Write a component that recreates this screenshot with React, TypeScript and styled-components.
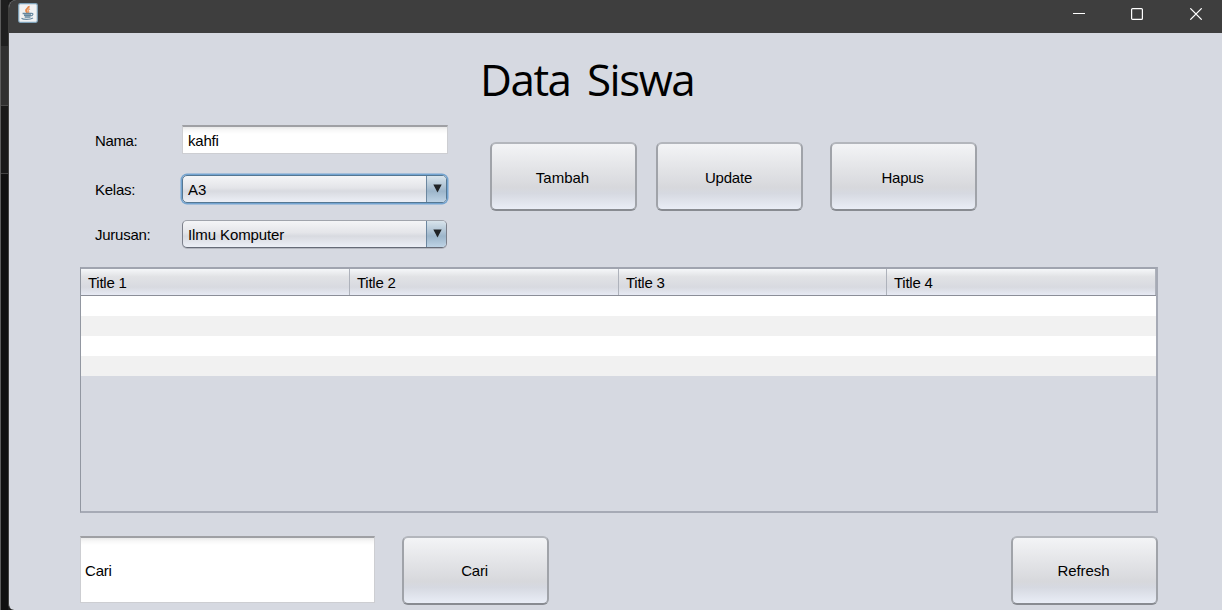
import React from 'react';
import styled, { createGlobalStyle, css } from 'styled-components';

const Global = createGlobalStyle`
  * { box-sizing: border-box; }
  html, body { margin: 0; padding: 0; overflow: hidden; background: #d6d9e1; }
  body { font: 15px/20px "Liberation Sans", Arial, sans-serif; color: #000; }
`;

const Screen = styled.div`
  display: flex;
  width: 1222px;
  height: 610px;
  overflow: hidden;
  background: #1b1b1b;
`;

const Backdrop = styled.div`
  width: 8px;
  flex: none;
  border-left: 1px solid #5c5c5c;
  background: linear-gradient(
    #1f1f1f 0 46px, #303030 46px 105px, #4b4b4b 105px 106px,
    #191919 106px 173px, #444 173px 174px, #101010 174px
  );
`;

const Window = styled.div`
  flex: 1;
  display: flex;
  flex-direction: column;
  border-left: 1px solid #40403e;
  border-radius: 8px 0 0 6px;
  overflow: hidden;
  background: #d6d9e1;
`;

const TitleBar = styled.header`
  display: flex;
  justify-content: space-between;
  height: 33px;
  flex: none;
  padding: 3px 19px 0 9px;
  background: #3e3e3e;
`;

const Controls = styled.div`
  display: flex;
  gap: 46px;
  padding-top: 5px;
`;

const Content = styled.main`
  display: flex;
  flex-direction: column;
  padding: 22px 64px 0 71px;
`;

const Heading = styled.h1`
  margin: 0 0 0 400px;
  height: 50px;
  font: 400 44px/49px "Open Sans", "Noto Sans", sans-serif;
  letter-spacing: -1.5px;
  word-spacing: 6.5px;
  white-space: nowrap;
`;

const Top = styled.section`
  display: flex;
  height: 162px;
  padding-left: 15px;
`;

const Form = styled.div`
  display: flex;
  flex-direction: column;
  width: 353px;
  padding-top: 20px;
`;

const Field = styled.div<{ $h: number; $gap?: number }>`
  display: flex;
  align-items: center;
  height: ${p => p.$h}px;
  margin-bottom: ${p => p.$gap || 0}px;
`;

const Label = styled.label`
  width: 87px;
  flex: none;
  padding-top: 2px;
`;

const Text = styled.span<{ $track?: number }>`
  letter-spacing: ${p => p.$track || 0}px;
  white-space: nowrap;
`;

const Input = styled.div<{ $w: number; $h: number; $pad?: number }>`
  display: flex;
  align-items: center;
  width: ${p => p.$w}px;
  height: ${p => p.$h}px;
  padding: 2px 0 0 ${p => p.$pad || 4}px;
  border: solid #cdced2;
  border-width: 2px 1px 1px 1px;
  border-top-color: #9fa0a4;
  background: linear-gradient(#e9e9e9 0, #f7f7f7 3px, #fff 7px);
`;

const Combo = styled.div<{ $focus?: boolean }>`
  display: flex;
  width: 265px;
  height: 28px;
  border: 1px solid #7b7f8a;
  border-top-color: #a0a4ac;
  border-bottom-color: #666b77;
  border-radius: 5px;
  overflow: hidden;
  background: linear-gradient(#f4f5f7, #e4e5e9 45%, #d8dae0 58%, #eceff6);
  box-shadow: 0 1px 0 #b4b7c0;
  ${p => p.$focus && css`
    border-color: #557792;
    box-shadow: 0 0 0 1.5px #73a4d1;
  `}
`;

const ComboValue = styled.div`
  flex: 1;
  padding: 4px 0 0 5px;
`;

const ComboArrow = styled.div`
  width: 20px;
  padding: 8px 0 0 6px;
  border-left: 1px solid #6c87a0;
  background: linear-gradient(#d8e4ec, #abc0d2 45%, #9cb5ca 58%, #bed3e5);
  svg { display: block; }
`;

const Actions = styled.div`
  display: flex;
  padding: 37px 0 0 42px;
`;

const Button = styled.button<{ $after?: number; $drop?: number }>`
  width: 147px;
  height: 69px;
  margin: 0 ${p => p.$after || 0}px 0 0;
  padding: ${p => p.$drop || 0}px 2px 0 0;
  border: 2px solid #a0a3a9;
  border-top-color: #b3b6bc;
  border-bottom-color: #888b91;
  border-radius: 6px;
  background: linear-gradient(#f3f4f6, #e4e5e8 35%, #d7d8dc 67%, #d6d9e1 76%, #e9edf6);
  font: inherit;
  color: #000;
`;

const Table = styled.div`
  width: 1078px;
  height: 246px;
  border: 1px solid #9297a1;
  border-top: 2px solid #a0a4af;
  border-right: 2px solid #a6aab5;
  border-bottom: 2px solid #a6aab5;
`;

const HeaderRow = styled.div`
  display: grid;
  grid-template-columns: 269px 269px 268px 269px;
  height: 27px;
  border-bottom: 1px solid #8b8e98;
  background: linear-gradient(#f5f7f9 0, #e1e2e5 30%, #d8dae0 70%, #e7eaf4);
`;

const HeaderCell = styled.div`
  padding: 4px 0 0 7px;
  border-right: 1px solid #aeb2bb;
`;

const Row = styled.div<{ $odd: boolean }>`
  height: 20px;
  background: ${p => (p.$odd ? '#f1f1f1' : '#fff')};
`;

const Bottom = styled.section`
  display: flex;
  align-items: flex-start;
  padding-top: 23px;
`;

const Spacer = styled.div`
  flex: 1;
`;

const SearchBox = styled.div`
  padding: 0 27px 0 0;
`;

const JavaIcon = () => (
  <svg width="20" height="20" viewBox="0 0 20 20" fill="none">
    <rect x=".7" y=".7" width="18.6" height="18.6" rx="1.5" fill="#f1f2f3" stroke="#7fa3bb" strokeWidth="1.2" />
    <path d="M10.8 3c.6 2.2-3.4 2.8-2.7 4.8.2 1 1 1.2 1.3 2" stroke="#e58a4d" strokeWidth="2" />
    <path d="M12 5.8c-2 .8-2.4 1.6-1.4 2.7.4.6 0 1.1-.4 1.5" stroke="#e9a272" strokeWidth="1.4" />
    <path d="M4.6 10.5H13M6 12.3h7M6.7 14h5.8" stroke="#64869d" strokeWidth="1.5" />
    <path d="M13 10.4c3-.5 2.2 2.3-.5 2.6M3.5 15.2c2 1.7 8.5 1.6 11.5-.2" stroke="#6c8da4" strokeWidth="1.2" />
  </svg>
);

const Arrow = () => (
  <svg width="9" height="9" viewBox="0 0 9 9">
    <path d="M.3.5h8.4L4.5 8.6z" fill="#202326" />
  </svg>
);

const titles = ['Title 1', 'Title 2', 'Title 3', 'Title 4'];

export default function App() {
  return (
    <>
      <Global />
      <Screen>
        <Backdrop />
        <Window>
          <TitleBar>
            <JavaIcon />
            <Controls>
              <svg width="12" height="12" fill="none" stroke="#fff"><path d="M0 5.5h12" /></svg>
              <svg width="12" height="12" fill="none" stroke="#fff" strokeWidth="1.2"><rect x=".6" y=".6" width="10.8" height="10.8" rx="1" /></svg>
              <svg width="14" height="12" fill="none" stroke="#fff" strokeWidth="1.2"><path d="M1.3.3l11.4 11.4M12.7.3L1.3 11.7" /></svg>
            </Controls>
          </TitleBar>
          <Content>
            <Heading>Data Siswa</Heading>
            <Top>
              <Form>
                <Field $h={29} $gap={21}>
                  <Label><Text $track={-0.35}>Nama:</Text></Label>
                  <Input $w={266} $h={29} $pad={5}><Text $track={-0.2}>kahfi</Text></Input>
                </Field>
                <Field $h={28} $gap={17}>
                  <Label><Text $track={-0.25}>Kelas:</Text></Label>
                  <Combo $focus><ComboValue><Text>A3</Text></ComboValue><ComboArrow><Arrow /></ComboArrow></Combo>
                </Field>
                <Field $h={28}>
                  <Label><Text $track={-0.25}>Jurusan:</Text></Label>
                  <Combo><ComboValue><Text $track={-0.1}>Ilmu Komputer</Text></ComboValue><ComboArrow><Arrow /></ComboArrow></Combo>
                </Field>
              </Form>
              <Actions>
                <Button $after={19} $drop={3}><Text>Tambah</Text></Button>
                <Button $after={27} $drop={3}><Text $track={-0.2}>Update</Text></Button>
                <Button $drop={3}><Text $track={-0.3}>Hapus</Text></Button>
              </Actions>
            </Top>
            <Table>
              <HeaderRow>
                {titles.map(t => <HeaderCell key={t}><Text $track={-0.25}>{t}</Text></HeaderCell>)}
              </HeaderRow>
              {[0, 1, 2, 3].map(i => <Row key={i} $odd={i % 2 === 1} />)}
            </Table>
            <Bottom>
              <SearchBox><Input $w={295} $h={67}><Text $track={-0.2}>Cari</Text></Input></SearchBox>
              <Button $drop={1}><Text $track={-0.2}>Cari</Text></Button>
              <Spacer />
              <Button $drop={1}><Text $track={-0.1}>Refresh</Text></Button>
            </Bottom>
          </Content>
        </Window>
      </Screen>
    </>
  );
}
